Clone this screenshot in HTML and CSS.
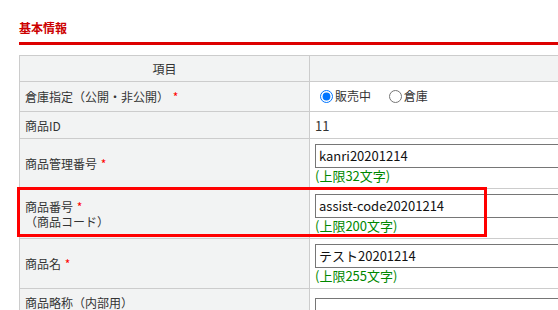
FILE: index.html
```html
<!DOCTYPE html>
<html lang="ja">
<head>
  <meta charset="UTF-8">
  <meta name="viewport" content="width=device-width, initial-scale=1">
  <link rel="stylesheet" href="styles.css">
</head>
<body>
  <div class="page">
    <h2 class="section-title">基本情報</h2>
    <table class="form-table">
      <colgroup>
        <col class="col-label">
        <col>
      </colgroup>
      <tr class="row-head">
        <th class="head-cell">項目</th>
        <th class="head-cell"></th>
      </tr>
      <tr class="row-radio">
        <th>倉庫指定（公開・非公開） <span class="req">*</span></th>
        <td>
          <label class="choice"><input type="radio" name="warehouse" checked>販売中</label>
          <label class="choice"><input type="radio" name="warehouse">倉庫</label>
        </td>
      </tr>
      <tr class="row-id">
        <th>商品ID</th>
        <td class="plain">11</td>
      </tr>
      <tr class="row-input">
        <th>商品管理番号 <span class="req">*</span></th>
        <td>
          <input class="text-field" type="text" value="kanri20201214">
          <div class="limit">(上限32文字)</div>
        </td>
      </tr>
      <tr class="row-input">
        <th>商品番号 <span class="req">*</span><br>（商品コード）</th>
        <td>
          <input class="text-field" type="text" value="assist-code20201214">
          <div class="limit">(上限200文字)</div>
        </td>
      </tr>
      <tr class="row-input">
        <th>商品名 <span class="req">*</span></th>
        <td>
          <input class="text-field" type="text" value="テスト20201214">
          <div class="limit">(上限255文字)</div>
        </td>
      </tr>
      <tr class="row-tall">
        <th>商品略称（内部用）<br>（一覧画面などで表示）<br>&nbsp;</th>
        <td>
          <input class="text-field" type="text" value="">
          <div class="limit">(上限64文字)</div>
        </td>
      </tr>
    </table>
  </div>
  <!-- annotation frame drawn over the screenshot -->
  <div class="highlight"></div>
</body>
</html>
```

FILE: styles.css
```css
html,
body {
  margin: 0;
  overflow: hidden;
  background: #fff;
}

body {
  position: relative;
  font-family: "Noto Sans CJK JP", sans-serif;
  font-size: 12px;
  color: #333;
}

.page {
  padding: 20px 0 0 19px;
}

.section-title {
  margin: 0;
  padding-bottom: 6px;
  font-size: 12px;
  line-height: 16px;
  font-weight: bold;
  color: #c00;
  border-bottom: 3px solid #d00;
}

.form-table {
  margin-top: 10px;
  width: 820px;
  border-collapse: collapse;
}

.col-label {
  width: 290px;
}

.form-table th,
.form-table td {
  border: 1px solid #ccc;
  padding: 0 5px;
  line-height: 15px;
  vertical-align: middle;
}

.form-table th {
  background: #f2f3f3;
  font-weight: normal;
  text-align: left;
}

.form-table th.head-cell {
  text-align: center;
}

.row-head th {
  height: 25px;
}

.row-radio th,
.row-radio td {
  height: 29px;
}

.row-id th,
.row-id td {
  height: 26px;
}

.row-input th,
.row-input td {
  height: 49px;
}

.row-tall th,
.row-tall td {
  height: 57px;
}

.plain {
  font-size: 13px;
}

.req {
  margin-left: 1px;
  color: #f00;
}

.choice {
  display: inline-flex;
  align-items: center;
  margin-right: 10px;
  line-height: 16px;
}

.choice input {
  margin: 0 2px 0 5px;
}

.text-field {
  display: block;
  box-sizing: border-box;
  width: 100%;
  height: 24px;
  margin: 0;
  padding: 0 3px;
  border: 1px solid #767676;
  border-radius: 0;
  font-family: inherit;
  font-size: 13px;
  color: #111;
}

.limit {
  font-size: 13px;
  line-height: 16px;
  color: #080;
}

.highlight {
  position: absolute;
  left: 17px;
  top: 187px;
  width: 470px;
  height: 50px;
  box-sizing: border-box;
  border: 3px solid #f00;
}
```
